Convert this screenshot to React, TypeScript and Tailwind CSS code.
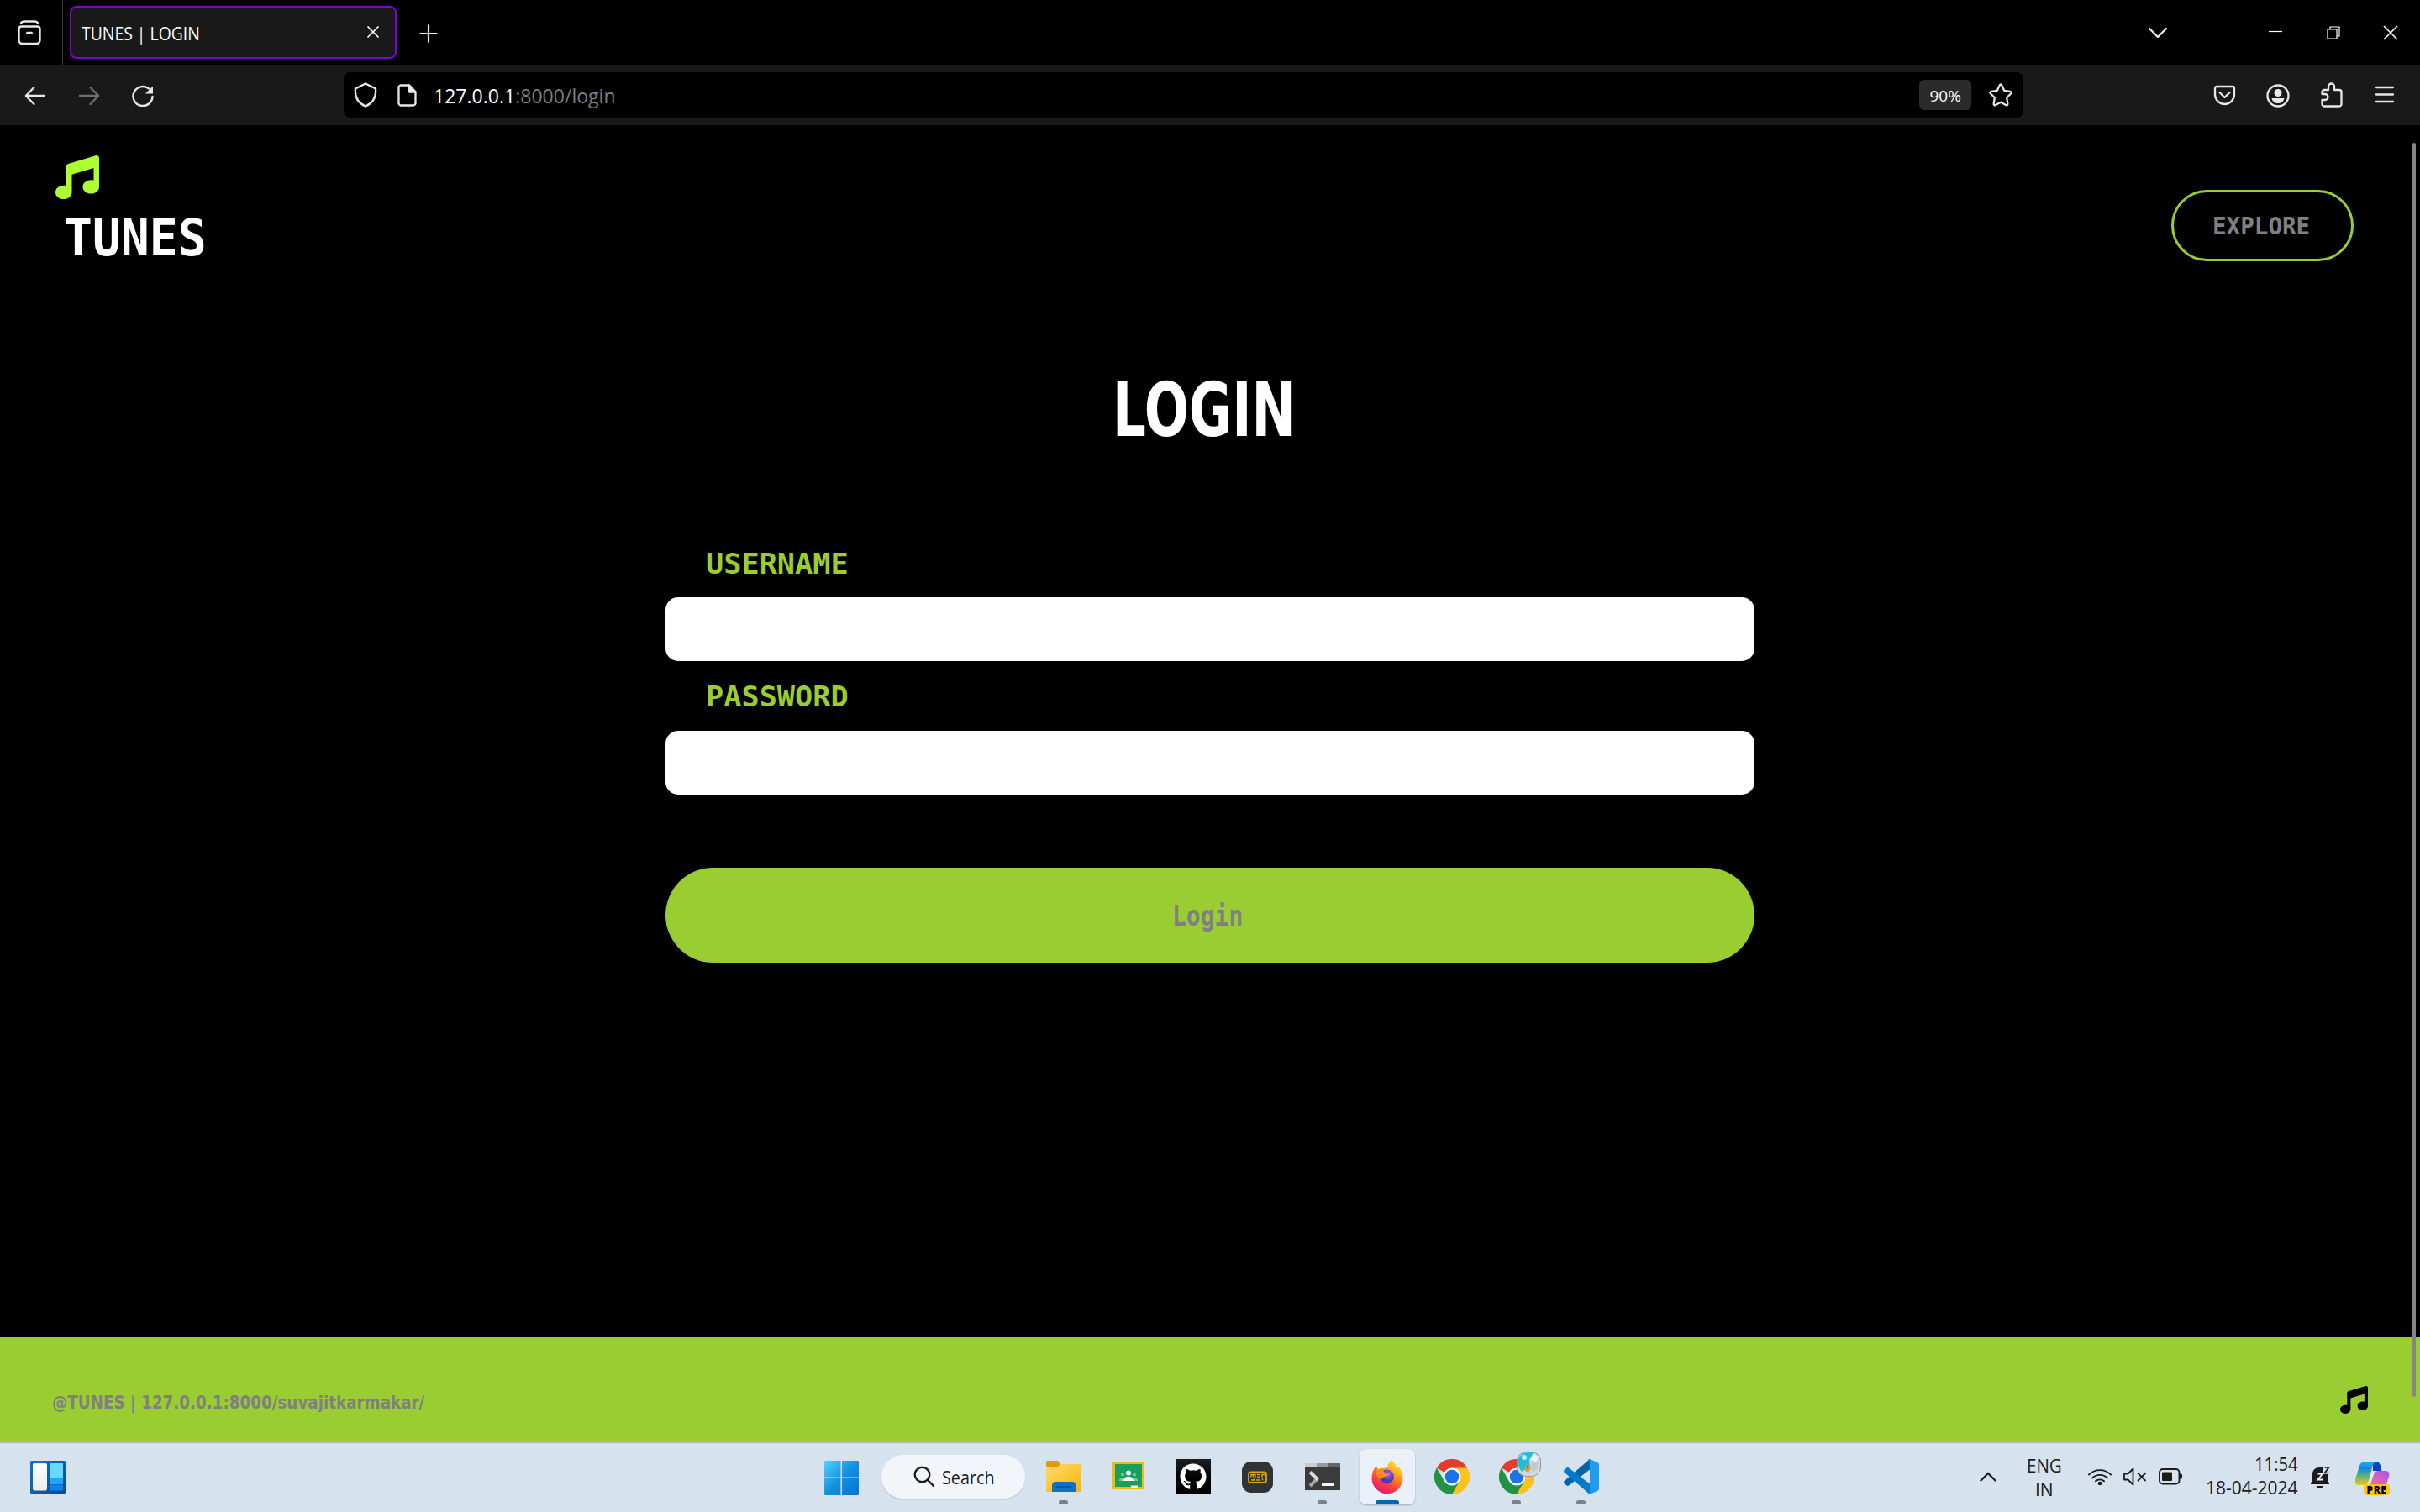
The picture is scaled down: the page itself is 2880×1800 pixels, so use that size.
import React, { useLayoutEffect, useRef, useState } from 'react';
import { FaGithub, FaMusic } from 'react-icons/fa6';

/* Text scaled horizontally so that it fills the width of its box. */
function Fit({ children, className }: { children: React.ReactNode; className: string }) {
  const box = useRef<HTMLSpanElement>(null);
  const text = useRef<HTMLSpanElement>(null);
  const [scale, setScale] = useState(1);
  useLayoutEffect(() => {
    if (box.current && text.current) setScale(box.current.clientWidth / text.current.offsetWidth);
  }, []);
  return (
    <span ref={box} className={`block shrink-0 whitespace-nowrap ${className}`}>
      <span ref={text} className="inline-block origin-left" style={{ transform: `scaleX(${scale})` }}>{children}</span>
    </span>
  );
}

function TabBar() {
  return (
    <div className="flex h-[77px] items-center bg-black text-[#fbfbfe]">
      <div className="flex h-full w-[75px] items-center border-r border-[#3a3a3a] pl-5">
        <svg className="size-[30px]" viewBox="0 0 30 30" fill="none" stroke="#e6e6e6" strokeWidth="2.4" strokeLinecap="round">
          <path d="M5 3.5c1-2 2-2 4-2h12c2 0 3 0 4 2" />
          <path d="M5.500 7.500h19c2 0 3 1 3 3V24a4 4 0 0 1-4 4h-17a4 4 0 0 1-4-4V10.500c0-2 1-3 3-3z" />
          <path d="M12.500 15.200h5" strokeWidth="3" />
        </svg>
      </div>
      <div className="ml-2 flex h-[63px] w-[389px] items-center justify-between rounded-lg border-2 border-[#8000d7] bg-[#191919] pl-3 pr-[18px]">
        <Fit className="mt-px w-[141px] font-['Open_Sans'] text-[22px] leading-[30px]">TUNES | LOGIN</Fit>
        <svg className="-mt-px size-4" viewBox="0 0 16 16" stroke="#fff" strokeWidth="1.700"><path d="M1.500 1.500l13 13M14.500 1.500l-13 13" /></svg>
      </div>
      <svg className="ml-[26px] mt-0.5 size-6" viewBox="0 0 24 24" stroke="#e6e6e6" strokeWidth="2.200"><path d="M12 1.500v21M1.500 12h21" /></svg>
      <div className="ml-auto flex items-center pr-[26px]">
        <svg className="h-3 w-6" viewBox="0 0 24 12" fill="none" stroke="#f0f0f0" strokeWidth="2.200" strokeLinecap="round"><path d="M2 1l10 10L22 1" /></svg>
        <svg className="-mt-px ml-[120px] size-4" viewBox="0 0 16 16" stroke="#fff" strokeWidth="1.200"><path d="M0 7.500h16" /></svg>
        <svg className="ml-[53px] size-4" viewBox="0 0 16 16" fill="none" stroke="#fff" strokeWidth="1.200"><path d="M4 4V1h11v11h-3" /><path d="M1 4h11v11H1z" /></svg>
        <svg className="ml-[51px] size-[18px]" viewBox="0 0 18 18" stroke="#fff" strokeWidth="1.600"><path d="M1 1l16 16M17 1L1 17" /></svg>
      </div>
    </div>
  );
}

function Toolbar() {
  return (
    <div className="flex h-[72px] items-center bg-[#191919]">
      <svg className="ml-[29px] mt-0.5 size-[26px]" viewBox="0 0 26 26" fill="none" stroke="#e8e8e8" strokeWidth="2.300" strokeLinecap="round" strokeLinejoin="round"><path d="M24 13H2M11.500 3L1.800 13l9.700 10" /></svg>
      <svg className="ml-[38px] mt-0.5 size-[26px]" viewBox="0 0 26 26" fill="none" stroke="#6f6f6f" strokeWidth="2.300" strokeLinecap="round" strokeLinejoin="round"><path d="M2 13h22M14.500 3l9.700 10-9.700 10" /></svg>
      <svg className="ml-[38px] mt-0.5 size-[26px]" viewBox="0 0 26 26" fill="none" stroke="#e8e8e8" strokeWidth="2.400" strokeLinecap="round"><path d="M24.500 14A11.500 11.500 0 1 1 20 4.400" /><path d="M25 1.500v9h-9z" fill="#e8e8e8" stroke="none" /></svg>
      <div className="ml-[226px] flex h-[54px] w-[1999px] items-center rounded-lg bg-black">
        <svg className="ml-3 h-[30px] w-7" viewBox="0 0 28 30" fill="none" stroke="#e8e8e8" strokeWidth="2.300" strokeLinejoin="round"><path d="M14 1.500L26 7.500C27 18 22 25 14 28.500 6 25 1 18 2 7.500z" /></svg>
        <svg className="ml-6 h-[27px] w-[23px]" viewBox="0 0 23 27" fill="none" stroke="#e8e8e8" strokeWidth="2.300" strokeLinejoin="round"><path d="M5 1.500h9l7.500 8V22a3 3 0 0 1-3 3.500H5A3 3 0 0 1 1.500 22V5A3 3 0 0 1 5 1.500z" /><path d="M14 1.500v8h7.500z" fill="#e8e8e8" /></svg>
        <Fit className="ml-5 mt-0.5 w-[217px] font-['Open_Sans'] text-2xl leading-8 text-[#7c7c7f]"><span className="text-[#fbfbfe]">127.0.0.1</span>:8000/login</Fit>
        <div className="ml-auto flex h-9 w-[62px] items-center justify-center rounded-md bg-[#2b2b2c] text-[#fbfbfe]">
          <Fit className="mt-0.5 w-[37px] font-['Open_Sans'] text-[19px] leading-6">90%</Fit>
        </div>
        <svg className="ml-5 mr-3 size-[30px]" viewBox="0 0 30 30" fill="none" stroke="#e8e8e8" strokeWidth="2.300" strokeLinejoin="round"><path d="M15 2.500c.8 0 1.100.5 1.400 1.200l2.800 6.100 6.900 1c2 .3 2 1.600.9 2.700l-4.800 4.700 1.100 7c.3 1.800-.8 2.500-2.200 1.700L15 23.700l-6.100 3.200c-1.400.8-2.500.1-2.200-1.700l1.100-7L3 13.500c-1.100-1.100-1.100-2.400.9-2.700l6.900-1 2.800-6.100c.3-.7.6-1.200 1.400-1.200z" /></svg>
      </div>
      <div className="ml-auto flex items-center pr-[30px]">
        <svg className="size-[27px]" viewBox="0 0 27 27" fill="none" stroke="#e8e8e8" strokeWidth="2.300" strokeLinecap="round" strokeLinejoin="round"><path d="M4 3h19a2 2 0 0 1 2 2v7.500a11.500 11.500 0 0 1-23 0V5a2 2 0 0 1 2-2z" /><path d="M7.500 10l6 6 6-6" /></svg>
        <svg className="ml-9 mt-0.5 size-7" viewBox="0 0 28 28" fill="none" stroke="#e8e8e8" strokeWidth="2.300"><circle cx="14" cy="14" r="12.500" /><circle cx="14" cy="10.500" r="4.500" fill="#e8e8e8" stroke="none" /><path d="M6.500 17h15c-1 4-4 6-7.500 6s-6.500-2-7.500-6z" fill="#e8e8e8" stroke="none" /></svg>
        <svg className="ml-9 h-[30px] w-7" viewBox="0 0 28 30" fill="none" stroke="#e8e8e8" strokeWidth="2.300" strokeLinejoin="round"><path d="M5 9h5V5a3.500 3.500 0 0 1 7 0v4h6a2.500 2.500 0 0 1 2.500 2.500V26a2.500 2.500 0 0 1-2.500 2.500H5A2.500 2.500 0 0 1 2.500 26v-5H6a3.500 3.500 0 0 0 0-7H2.500v-2.500A2.500 2.500 0 0 1 5 9z" /></svg>
        <svg className="ml-[37px] h-[22px] w-6" viewBox="0 0 24 22" stroke="#e8e8e8" strokeWidth="2.300" strokeLinecap="round"><path d="M2 2h20M2 10.500h20M2 19h20" /></svg>
      </div>
    </div>
  );
}

function Field({ label, type, labelClass }: { label: string; type: string; labelClass: string }) {
  return (
    <label className="block">
      <Fit className={`ml-12 h-[25px] w-[170px] font-['DejaVu_Sans_Mono'] text-[34px] font-bold leading-[27px] text-[#9acd32] ${labelClass}`}>{label}</Fit>
      <input type={type} className="block h-[76px] w-full rounded-[15px] bg-white px-6 text-3xl text-black outline-none" />
    </label>
  );
}

function Page() {
  return (
    <div className="relative flex h-[1567px] flex-col bg-black">
      <header className="flex h-[162px] items-start justify-between">
        <div className="pl-[66px] pt-9">
          <FaMusic className="size-[52px] text-[#adff2f]" />
          <Fit className="ml-2.500 ml-[10px] mt-[23px] h-[46px] w-[170px] font-['DejaVu_Sans_Mono'] text-[61px] font-bold leading-[46px] text-white">TUNES</Fit>
        </div>
        <button className="mr-[79px] mt-[77px] flex h-[85px] w-[217px] items-center rounded-full border-[3px] border-[#9acd32] pl-[46px]">
          <Fit className="w-[116px] font-['DejaVu_Sans_Mono'] text-[29px] font-bold leading-8 text-[#808080]">EXPLORE</Fit>
        </button>
      </header>
      <main className="mx-auto mt-[143px] w-[1296px]">
        <h1>
          <Fit className="ml-[532px] h-[65px] w-[218px] font-['DejaVu_Sans'] text-[89px] font-bold leading-[68px] text-white">LOGIN</Fit>
        </h1>
        <form className="mt-[139px]">
          <Field label="USERNAME" type="text" labelClass="mb-7" />
          <div className="h-[29px]" />
          <Field label="PASSWORD" type="password" labelClass="mb-[29px]" />
          <button type="button" className="mt-[87px] flex h-[113px] w-full rounded-full bg-[#9acd32] pl-[603px] pt-[39px]">
            <Fit className="w-[84px] text-left font-['DejaVu_Sans_Mono'] text-[34px] font-bold leading-9 text-[#808080]">Login</Fit>
          </button>
        </form>
      </main>
      <footer className="mt-auto flex h-[124px] items-start justify-between bg-[#9acd32] pl-[62px] pr-[62px] pt-[58px]">
        <Fit className="mt-1 w-[443px] font-['DejaVu_Sans'] text-[21px] font-bold leading-8 text-[#808080]">@TUNES | 127.0.0.1:8000/suvajitkarmakar/</Fit>
        <FaMusic className="size-[33px] text-black" />
      </footer>
      <div className="absolute right-[5px] top-[21px] h-[1493px] w-1 rounded-full bg-[#858585]" />
    </div>
  );
}

function Chrome() {
  return (
    <svg className="size-[42px]" viewBox="0 0 48 48">
      <path d="M24 24L3.200 12A24 24 0 0 1 44.800 12z" fill="#e33b2e" />
      <path d="M24 12h20.800A24 24 0 0 1 24 48l10.400-18z" fill="#fcc31e" />
      <path d="M13.600 30L3.200 12A24 24 0 0 0 24 48l10.400-18z" fill="#229342" />
      <circle cx="24" cy="24" r="12" fill="#fff" />
      <circle cx="24" cy="24" r="9.500" fill="#1a73e8" />
    </svg>
  );
}

function AppSlot({ children, mark }: { children: React.ReactNode; mark?: 'open' | 'active' }) {
  return (
    <div className={`relative flex h-[66px] w-[66px] shrink-0 items-center justify-center rounded-lg ${mark === 'active' ? 'bg-[#ebf1f8] shadow-[0_1px_2px_rgba(0,0,0,0.25)]' : ''}`}>
      {children}
      {mark === 'open' && <span className="absolute bottom-0 left-[27px] h-[5px] w-[11px] rounded-full bg-[#7a8187]" />}
      {mark === 'active' && <span className="absolute bottom-0 left-[19px] h-[5px] w-7 rounded-full bg-[#0067b8]" />}
    </div>
  );
}

function Taskbar() {
  return (
    <div className="flex h-[84px] items-start border-t-2 border-[#adb4c1] bg-[#d6e2ee] text-[#1b1b1b]">
      <svg className="ml-9 mt-[21px] h-[39px] w-[42px]" viewBox="0 0 42 39">
        <defs>
          <linearGradient id="wd" x2="1" y2="1"><stop stopColor="#0078d4" /><stop offset="1" stopColor="#114a8b" /></linearGradient>
          <linearGradient id="ww" x2="0" y2="1"><stop stopColor="#fff" /><stop offset="1" stopColor="#ececee" /></linearGradient>
        </defs>
        <rect width="42" height="39" rx="1.500" fill="url(#wd)" />
        <rect x="3" y="3" width="17" height="32.500" rx="2" fill="url(#ww)" />
        <path d="M23 3h16v18H23z" fill="#69daff" /><path d="M23 21h16v7H23z" fill="#1ba8fb" /><path d="M23 28.500h16v7H23z" fill="#0a84ee" />
      </svg>
      <svg className="ml-[903px] mt-[21px] size-[41px]" viewBox="0 0 41 41">
        <defs><linearGradient id="win" gradientUnits="userSpaceOnUse" x2="41" y2="41"><stop stopColor="#4fd3ff" /><stop offset=".5" stopColor="#1490df" /><stop offset="1" stopColor="#0572d3" /></linearGradient></defs>
        <path d="M1 0h18.500v19.500H0V1zM21 0h19l1 1v18.500H21zM0 21h19.500v20H1l-1-1zM21 21h20v19l-1 1H21z" fill="url(#win)" />
      </svg>
      <div className="ml-[27px] mt-[14px] flex h-[52px] w-[171px] items-center rounded-full bg-[#f2f6fa] shadow-[0_2px_0_#c6d1de]">
        <svg className="ml-[38px] size-[26px]" viewBox="0 0 26 26" fill="none" stroke="#1b1b1b" strokeWidth="2.400" strokeLinecap="round"><circle cx="10.500" cy="10.500" r="8.800" /><path d="M17 17l7 7" /></svg>
        <Fit className="ml-2 mt-px w-[63px] font-['Open_Sans'] text-[21px] leading-[30px]">Search</Fit>
      </div>
      <div className="ml-[13px] mt-[7px] flex gap-[11px]">
        <AppSlot mark="open">
          <svg className="h-[38px] w-[42px]" viewBox="0 0 42 38">
            <defs><linearGradient id="fo" x2="1" y2="1"><stop stopColor="#ffda6e" /><stop offset="1" stopColor="#fbb405" /></linearGradient></defs>
            <path d="M0 2a2 2 0 0 1 2-2h12l3 4v6H0z" fill="#de9c00" />
            <path d="M0 8l14-1 3-3h24a1 1 0 0 1 1 1v31a1 1 0 0 1-1 1H1a1 1 0 0 1-1-1z" fill="url(#fo)" />
            <path d="M7 37V29a4 4 0 0 1 4-4h20a4 4 0 0 1 4 4v8z" fill="#0f72c4" /><path d="M13 31h16" stroke="#0a559c" strokeWidth="2" strokeLinecap="round" />
          </svg>
        </AppSlot>
        <AppSlot>
          <svg className="-mt-1 mr-px h-[33px] w-[39px]" viewBox="0 0 39 33">
            <rect width="39" height="33" rx="2.500" fill="#f5b912" /><path d="M4 3h32v27H4z" fill="#189f5d" />
            <circle cx="20" cy="13.500" r="3" fill="#fff" /><path d="M14 23c0-4 3-5 6-5s6 1 6 5z" fill="#fff" />
            <g fill="#78c79f"><circle cx="13" cy="15.500" r="2" /><circle cx="27" cy="15.500" r="2" /><path d="M9 23c0-3 2-4 5-4l-1 4zM31 23c0-3-2-4-5-4l1 4z" /></g>
            <path d="M23 28.500h8V31h-8z" fill="#fff" />
          </svg>
        </AppSlot>
        <AppSlot>
          <div className="flex size-[42px] items-center justify-center bg-gradient-to-b from-[#1b1f24] to-black"><FaGithub className="size-8 text-white" /></div>
        </AppSlot>
        <AppSlot>
          <svg className="mr-px size-[37px]" viewBox="0 0 37 37" fill="none"><rect width="37" height="37" rx="11" fill="#2f3437" /><g stroke="#dfa60f" strokeWidth="1.800"><rect x="8" y="12.500" width="21" height="12.500" rx="2.500" /><path d="M11 18.500v-3h5v3M13.500 15.500v3M18 15.500h4M18 18.500h4M24 18.500v-3h3M11 22h4v-2M17 22h5M24.500 20v2.500" strokeWidth="1.400" /></g></svg>
        </AppSlot>
        <AppSlot mark="open">
          <svg className="h-8 w-[42px]" viewBox="0 0 42 32"><path d="M0 0h42v32H0z" fill="#3b3b3b" /><path d="M0 0h14v5H0z" fill="#ccc" /><path d="M14 0h14v5H14z" fill="#999" /><path d="M28 0h14v5H28z" fill="#666" /><path d="M15 18l-9 9" stroke="#a5a5a5" strokeWidth="4" /><path d="M6 10.500l9.500 9" stroke="#ddd" strokeWidth="4" /><path d="M20 23h14v4H20z" fill="#f4f4f4" /></svg>
        </AppSlot>
        <AppSlot mark="active">
          <svg className="h-10 w-[38px]" viewBox="0 0 38 40">
            <defs>
              <linearGradient id="ff" x1=".8" y1="0" x2=".3" y2="1"><stop stopColor="#fff044" /><stop offset=".35" stopColor="#ffa21c" /><stop offset=".7" stopColor="#ff4238" /><stop offset="1" stopColor="#e3137c" /></linearGradient>
              <radialGradient id="fp" cx=".6" cy=".3"><stop stopColor="#a259ff" /><stop offset="1" stopColor="#4a3cb4" /></radialGradient>
            </defs>
            <path d="M24.500 0c3 3 5 5.500 5.500 9l3-.5c3 4 4.500 8 4.500 13A18.500 18.500 0 0 1 .5 22C.5 16 2.500 11 5.500 7l2 4.500 5-1.500 7-1C19 5 21.500 2 24.500 0z" fill="url(#ff)" />
            <circle cx="18.500" cy="20" r="8.500" fill="url(#fp)" />
            <path d="M5.500 7l2.500 4 4.500-1 4.500 6.500h5c-1 2.500-3.500 3-6 3.500-3 1-3 2-5 3-3-1-7-6-5.500-16z" fill="#ff8b1c" />
          </svg>
        </AppSlot>
        <AppSlot><Chrome /></AppSlot>
        <AppSlot mark="open">
          <Chrome />
          <svg className="absolute left-[33px] top-[3px] size-[30px]" viewBox="0 0 30 30">
            <rect x=".5" y=".5" width="28" height="29" rx="11" fill="#d3dadd" stroke="#8a9599" />
            <path d="M13 1h7l-5 9 1 8-10 6C-1 16-1 3 13 1z" fill="#22bcdc" />
            <circle cx="9" cy="7" r="3" fill="#b5f1fa" />
            <path d="M20 2l6 5-3 5-6-2z" fill="#eef2f3" /><path d="M17 12l8 1v8l-7 4z" fill="#c2cacd" />
            <path d="M10 18l4-3 3 5-3 5-4-2z" fill="#d9a03a" /><path d="M11.500 17l3 1-1 4z" fill="#b02817" />
          </svg>
        </AppSlot>
        <AppSlot mark="open">
          <svg className="size-[42px]" viewBox="0 0 42 42"><path d="M31 0v12.500L6 31.500c-1 .7-1.800.5-2.500 0L.6 29c-.8-.7-.8-2 0-2.800z" fill="#0065a9" /><path d="M3.500 10.500c.7-.6 1.500-.6 2.500 0l25 19V42L.6 15.800c-.8-.8-.8-2 0-2.800z" fill="#007acc" /><path d="M31 0l9.500 4.300c1 .5 1.500 1 1.500 2.200v29c0 1.200-.5 1.700-1.500 2.200L31 42c-1 .3-2-.5-2.500-1.500 1.500.5 2.500 0 2.500-2V3.500c0-2-1-2.500-2.500-2C29 .5 30-.3 31 0z" fill="#1f9cf0" /></svg>
        </AppSlot>
      </div>
      <div className="ml-auto mt-[13px] flex items-start pr-[35px]">
        <svg className="mt-[21px] h-3 w-5" viewBox="0 0 20 12" fill="none" stroke="#1b1b1b" strokeWidth="2.300" strokeLinecap="round"><path d="M1.500 10.500L10 2l8.500 8.500" /></svg>
        <div className="ml-[36px] flex w-[42px] flex-col items-center font-['Open_Sans'] text-[21px] leading-7">
          <Fit className="w-[42px]">ENG</Fit>
          <Fit className="w-[22px]">IN</Fit>
        </div>
        <svg className="ml-[31px] mt-4 h-[22px] w-7" viewBox="0 0 28 22" fill="none" stroke="#1b1b1b" strokeWidth="1.900" strokeLinecap="round"><path d="M1 8.500a18.500 18.500 0 0 1 26 0M5 12.500a13 13 0 0 1 18 0M9 16.300a7.500 7.500 0 0 1 10 0" /><circle cx="14" cy="19" r="2.300" fill="#1b1b1b" stroke="none" /></svg>
        <svg className="ml-[14px] mt-4 h-[22px] w-7" viewBox="0 0 28 22" fill="none" stroke="#1b1b1b" strokeWidth="1.800" strokeLinejoin="round"><path d="M1 7.500h4.500L11.500 1.500v19l-6-6H1z" /><path d="M17 6.500l9.500 9.500M26.500 6.500L17 16" /></svg>
        <svg className="ml-[14px] mt-[17px] h-5 w-[29px]" viewBox="0 0 29 20" fill="none" stroke="#1b1b1b" strokeWidth="1.900"><rect x="1" y="1" width="23.500" height="17.500" rx="4" /><rect x="4" y="4.500" width="12" height="10.500" rx="1" fill="#1b1b1b" stroke="none" /><path d="M25 6.500h1.500a1.500 1.500 0 0 1 1.500 1.500v3a1.500 1.500 0 0 1-1.500 1.500H25z" fill="#1b1b1b" stroke="none" /></svg>
        <div className="-mt-0.5 ml-[27px] flex w-[110px] flex-col items-end font-['Open_Sans'] text-[21px] leading-7">
          <Fit className="w-[52px]">11:54</Fit>
          <Fit className="w-[110px]">18-04-2024</Fit>
        </div>
        <svg className="ml-[14px] mt-[14px] h-7 w-6" viewBox="0 0 24 28" fill="#1b1b1b"><path d="M1 20.500l2-3V10C3 5 6.500 2 11 2h4v8h6v7.500l2 3V22H1zM7.500 24h8.500c-1 2-2.300 2.800-4.200 2.800S8.500 26 7.500 24z" /><path d="M18 .5h6v9h-6z" fill="#d6e2ee" /><path d="M9.500 9.500H15l-5.500 7H15" fill="none" stroke="#f2f6fa" strokeWidth="1.900" /><path d="M17.500 2h5L17.500 8.500h5" fill="none" stroke="#1b1b1b" strokeWidth="1.700" /></svg>
        <div className="relative ml-[30px] mt-[9px] h-10 w-[42px]">
          <svg className="h-8 w-[41px]" viewBox="0 0 41 32">
            <defs>
              <linearGradient id="ca" x2="0" y2="1"><stop stopColor="#1aaef0" /><stop offset=".3" stopColor="#1786dc" /><stop offset=".65" stopColor="#67b868" /><stop offset="1" stopColor="#fcc40f" /></linearGradient>
              <linearGradient id="cb" x1="1" y1="0" x2="0" y2="1"><stop stopColor="#a24ff0" /><stop offset=".5" stopColor="#e064b8" /><stop offset="1" stopColor="#ff7d52" /></linearGradient>
            </defs>
            <path d="M21 0h4c2.500 0 4 1.500 5 5l1.500 6H21z" fill="#0d3fc4" />
            <path d="M12 0h13c-3 1-4 3-5 7l-4 16c-1 3-2 5-5 5H4c-4 0-5-3-4-7L5 5c1-3 3-5 7-5z" fill="url(#ca)" />
            <path d="M27 11h9c4 0 5 3 4 7l-3 9c-1 3-3 5-6 5H9c5-1 8-2 10-8l3-9c1-3 2-4 5-4z" fill="url(#cb)" />
            <path d="M21 11h6c-3 0-4 1-5 4l-4 10c-1 2-2 3-5 3 3-2 3-5 5-11z" fill="#eaf0f8" />
          </svg>
          <span className="absolute left-[10px] top-[27px] flex h-[13px] w-[31px] items-center justify-center rounded bg-[#ffc60b] font-['Open_Sans'] text-[12px] font-extrabold leading-none tracking-[0.5px] text-black">PRE</span>
        </div>
      </div>
    </div>
  );
}

export default function App() {
  return (
    <div className="h-[1800px] w-[2880px] overflow-hidden bg-black">
      <TabBar />
      <Toolbar />
      <Page />
      <Taskbar />
    </div>
  );
}
